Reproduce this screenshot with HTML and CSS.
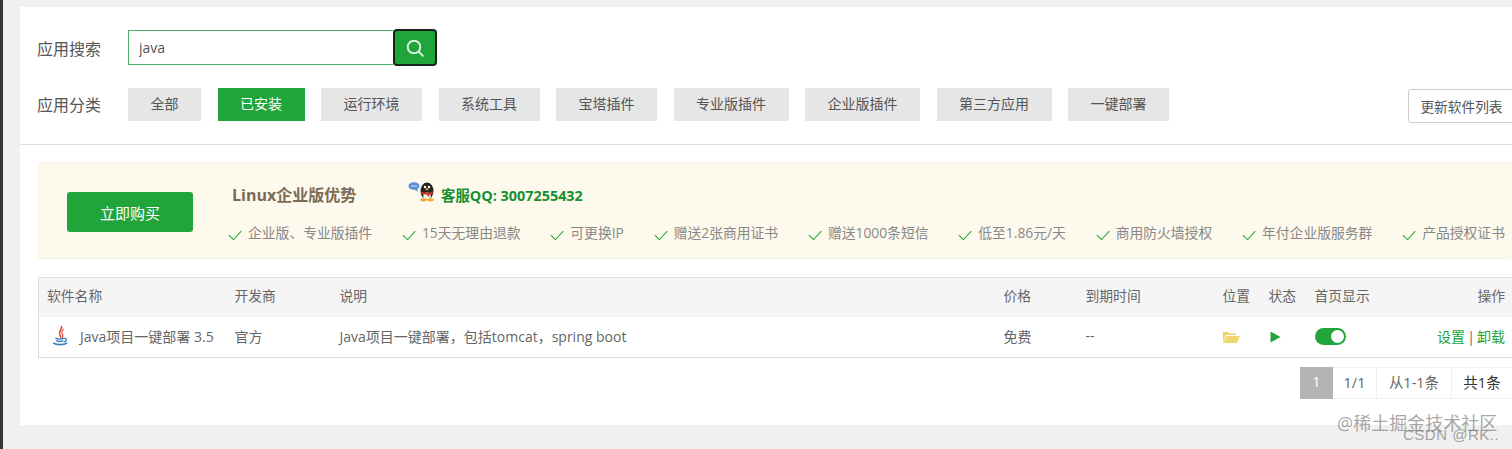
FILE: index.html
```html
<!DOCTYPE html>
<html lang="en">
<head>
    <meta charset="UTF-8">
    <meta name="viewport" content="width=device-width, initial-scale=1.0">
    <title>软件商店</title>
    <link rel="stylesheet" href="styles.css">
</head>
<body>
    <div class="sidebar-edge"></div>
    <div class="panel">
        <div class="filter">
            <div class="search-row">
                <span class="filter-label">应用搜索</span>
                <input class="search-input" type="text" value="java">
                <button class="search-btn">
                    <svg width="20" height="20" viewBox="0 0 20 20" fill="none" stroke="#d8f0dc" stroke-width="2" stroke-linecap="round"><circle cx="9" cy="9" r="6.3"/><path d="M13.6 13.6 L17.8 17.8"/></svg>
                </button>
            </div>
            <div class="cat-row">
                <span class="filter-label">应用分类</span>
                <div class="cats">
                    <span class="cat">全部</span>
                    <span class="cat active">已安装</span>
                    <span class="cat">运行环境</span>
                    <span class="cat">系统工具</span>
                    <span class="cat">宝塔插件</span>
                    <span class="cat">专业版插件</span>
                    <span class="cat">企业版插件</span>
                    <span class="cat">第三方应用</span>
                    <span class="cat">一键部署</span>
                </div>
                <button class="refresh-btn">更新软件列表</button>
            </div>
        </div>

        <div class="content">
            <div class="banner">
                <button class="buy-btn">立即购买</button>
                <div class="banner-info">
                    <div class="banner-top">
                        <span class="banner-title">Linux企业版优势</span>
                        <span class="qq">
                            <svg class="qq-icon" width="29" height="21" viewBox="0 0 29 21">
                                <ellipse cx="6" cy="5" rx="5.5" ry="3.8" fill="#5b8fd8"/>
                                <path d="M6 8 L10 11 L9 7 Z" fill="#5b8fd8"/>
                                <circle cx="4" cy="5" r=".7" fill="#fff"/><circle cx="6" cy="5" r=".7" fill="#fff"/><circle cx="8" cy="5" r=".7" fill="#fff"/>
                                <ellipse cx="19" cy="10" rx="6.5" ry="8.5" fill="#222"/>
                                <ellipse cx="19" cy="15" rx="3.8" ry="3.6" fill="#f4f1ea"/>
                                <circle cx="17" cy="6" r="1.2" fill="#fff"/><circle cx="21" cy="6" r="1.2" fill="#fff"/>
                                <path d="M13 10.5 Q19 13 25 10.5 L24.5 13 L21.5 13.5 L21 16 L18.5 13.5 Q15 13.5 13 12.5 Z" fill="#d8301f"/>
                                <path d="M19 7 L21 8.3 L19 9.4 L17 8.3 Z" fill="#f0a820"/>
                                <ellipse cx="15.5" cy="18.8" rx="3.2" ry="1.6" fill="#f0a820"/>
                                <ellipse cx="22.5" cy="18.8" rx="3.2" ry="1.6" fill="#f0a820"/>
                            </svg>
                            客服QQ: 3007255432
                        </span>
                    </div>
                    <ul class="perks">
                        <li>企业版、专业版插件</li>
                        <li>15天无理由退款</li>
                        <li>可更换IP</li>
                        <li>赠送2张商用证书</li>
                        <li>赠送1000条短信</li>
                        <li>低至1.86元/天</li>
                        <li>商用防火墙授权</li>
                        <li>年付企业版服务群</li>
                        <li>产品授权证书</li>
                    </ul>
                </div>
            </div>

            <table class="soft-table">
                <colgroup>
                    <col class="c-name"><col class="c-dev"><col class="c-desc"><col class="c-price"><col class="c-exp"><col class="c-pos"><col class="c-state"><col class="c-home"><col class="c-op">
                </colgroup>
                <thead>
                    <tr>
                        <th>软件名称</th><th>开发商</th><th>说明</th><th>价格</th><th>到期时间</th><th>位置</th><th>状态</th><th>首页显示</th><th class="op">操作</th>
                    </tr>
                </thead>
                <tbody>
                    <tr>
                        <td>
                            <span class="soft-name">
                                <svg width="17" height="22" viewBox="0 0 20 26" fill="none">
                                    <path d="M11 1 C13 5 7 7 9 11 C10 13 10.5 13.5 10 15" stroke="#d8432c" stroke-width="1.8"/>
                                    <path d="M14 5 C11 7 11 9 12.5 11 C13.5 12.5 12.5 14 12 15" stroke="#e0573c" stroke-width="1.5"/>
                                    <path d="M4 15.5 C6 17 12 17 14 15.5 M5 18.5 C7 19.5 11 19.5 13 18.5" stroke="#3f7cc4" stroke-width="1.6"/>
                                    <path d="M14 16 C18 15 18 19 13.5 20" stroke="#3f7cc4" stroke-width="1.4"/>
                                    <path d="M1.5 21 C5 24 14 24 18 21" stroke="#3f7cc4" stroke-width="1.9"/>
                                </svg>
                                Java项目一键部署 3.5
                            </span>
                        </td>
                        <td>官方</td>
                        <td>Java项目一键部署，包括tomcat，spring boot</td>
                        <td>免费</td>
                        <td>--</td>
                        <td>
                            <svg class="folder" width="18" height="14" viewBox="0 0 18 14"><path d="M1 2 H6 L7.5 3.5 H14 V5 H4 L1 12 Z" fill="#efd06a"/><path d="M4.5 6 H18 L15 13 H1 Z" fill="#f2d66f"/></svg>
                        </td>
                        <td>
                            <svg class="play" width="11" height="12" viewBox="0 0 11 12"><path d="M0.5 0.5 L10.5 6 L0.5 11.5 Z" fill="#20a53a"/></svg>
                        </td>
                        <td><span class="toggle"></span></td>
                        <td class="op"><a class="link">设置</a> | <a class="link">卸载</a></td>
                    </tr>
                </tbody>
            </table>

            <div class="pager">
                <span class="page current">1</span>
                <span class="page p-total">1/1</span>
                <span class="page p-range">从1-1条</span>
                <span class="page p-count">共1条</span>
            </div>
        </div>
    </div>

    <div class="watermark">
        <div class="wm-juejin">@稀土掘金技术社区</div>
        <div class="wm-csdn">CSDN @RK..</div>
    </div>
</body>
</html>
```

FILE: styles.css
```css
*{
    margin: 0;
    padding: 0;
    box-sizing: border-box;
}

html,body{
    height: 449px;
    overflow: hidden;
}

body{
    background-color: #f0f0f0;
    font-family: "Open Sans", "Noto Sans CJK SC", sans-serif;
    font-size: 14px;
    color: #666;
    padding: 7px 0 0 20px;
}

.sidebar-edge{
    position: absolute;
    left: 0;
    top: 0;
    width: 3px;
    height: 449px;
    background-color: #33343a;
}

.panel{
    height: 418px;
    background-color: #fff;
}

/* search and categories */
.filter{
    height: 138px;
    padding: 22px 0 0 17px;
    border-bottom: 1px solid #ddd;
}

.search-row,.cat-row{
    display: flex;
    align-items: center;
}

.filter-label{
    width: 91px;
    font-size: 16px;
    color: #555;
    flex-shrink: 0;
}

.search-input{
    width: 265px;
    height: 35px;
    border: 1px solid #4fb166;
    border-right: none;
    padding: 0 10px;
    font-family: inherit;
    font-size: 14px;
    color: #555;
    outline: none;
}

.search-btn{
    width: 44px;
    height: 37px;
    background-color: #20a53a;
    border: 2px solid #14241a;
    border-radius: 4px;
    display: flex;
    align-items: center;
    justify-content: center;
}

.cat-row{
    margin-top: 20px;
}

.cats{
    display: flex;
    gap: 16.5px;
}

.cat{
    height: 33px;
    line-height: 31px;
    padding: 0 22.5px;
    background-color: #e6e6e6;
    color: #555;
    font-size: 14px;
}

.cat.active{
    background-color: #20a53a;
    color: #fff;
}

.refresh-btn{
    width: 112px;
    height: 34px;
    margin-left: auto;
    margin-right: -8px;
    margin-top: 2px;
    position: relative;
    top: 1px;
    background-color: #fff;
    border: 1px solid #ccc;
    border-radius: 3px;
    font-family: inherit;
    font-size: 13.7px;
    color: #555;
    padding-right: 5px;
}

.content{
    padding: 17px 0 0 18px;
}

/* buy banner */
.banner{
    height: 97px;
    background-color: #fdf9ed;
    border: 1px solid #f7f3e6;
    border-radius: 3px;
    border-right: none;
    display: flex;
    align-items: flex-start;
    padding: 29px 0 0 28px;
    overflow: hidden;
}

.buy-btn{
    width: 126px;
    height: 40px;
    background-color: #20a53a;
    border: none;
    border-radius: 3px;
    color: #fff;
    font-family: inherit;
    font-size: 15px;
    flex-shrink: 0;
}

.banner-info{
    margin-left: 35px;
    margin-top: -10px;
}

.banner-top{
    display: flex;
    align-items: center;
    height: 24px;
}

.banner-title{
    width: 176px;
    margin-left: 4px;
    font-size: 16px;
    font-weight: bold;
    color: #7b6b55;
}

.qq{
    display: flex;
    align-items: center;
    gap: 4px;
    font-size: 14.4px;
    font-weight: bold;
    color: #168f30;
    white-space: nowrap;
}

.qq-icon{
    margin-top: -5px;
}

.perks{
    list-style: none;
    display: flex;
    gap: 29.8px;
    margin-top: 18px;
    white-space: nowrap;
}

.perks li{
    font-size: 13.8px;
    color: #888;
    line-height: 18px;
    display: flex;
    align-items: center;
}

.perks li::before{
    content: "";
    width: 11px;
    height: 6px;
    margin: 0 7px 0 1px;
    border-left: 1px solid #20a53a;
    border-bottom: 1px solid #20a53a;
    transform: rotate(-48deg);
    flex-shrink: 0;
}

/* software table */
.soft-table{
    width: 1474px;
    margin-top: 18px;
    border-collapse: collapse;
    table-layout: fixed;
    border: 1px solid #ddd;
    border-right: none;
    white-space: nowrap;
}

.c-name{width: 188px;}
.c-dev{width: 105px;}
.c-desc{width: 664px;}
.c-price{width: 82px;}
.c-exp{width: 137px;}
.c-pos{width: 46px;}
.c-state{width: 46px;}
.c-home{width: 80px;}

.soft-table th{
    height: 39px;
    background-color: #f5f5f5;
    font-weight: normal;
    font-size: 13.8px;
    color: #666;
    text-align: left;
    padding: 0 0 4px 8px;
    border-bottom: 1px solid #eee;
}

.soft-table td{
    height: 41px;
    font-size: 14px;
    color: #666;
    padding: 0 0 3px 8px;
}

.soft-table .op{
    text-align: right;
    padding-right: 7px;
    padding-left: 0;
    word-spacing: -1.5px;
}

.soft-name{
    display: flex;
    align-items: center;
    gap: 11px;
    margin-left: 5px;
}

.link{
    color: #20a53a;
}

.toggle{
    display: block;
    position: relative;
    width: 31px;
    height: 17px;
    background-color: #20a53a;
    border-radius: 9px;
    margin-top: 1px;
}

.toggle::after{
    content: "";
    position: absolute;
    right: 2px;
    top: 2px;
    width: 13px;
    height: 13px;
    background-color: #fff;
    border-radius: 50%;
}

.folder,.play{
    display: block;
    margin-top: 3px;
}

.folder{
    margin-left: -1px;
}

.play{
    margin-left: 1px;
}

/* pagination */
.pager{
    display: flex;
    justify-content: flex-end;
    margin-top: 9px;
}

.page{
    height: 32px;
    line-height: 30px;
    text-align: center;
    font-size: 14.5px;
    color: #666;
    border-right: 1px solid #eee;
    border-top: 1px solid #f2f2f2;
    border-bottom: 1px solid #f2f2f2;
}

.page.current{
    width: 33px;
    background-color: #b3b3b3;
    color: #fff;
    border: none;
}

.p-total{width: 44px;}
.p-range{width: 75px;}
.p-count{width: 60px; border-right: none; color: #333;}

/* image watermark */
.watermark{
    position: absolute;
    right: 0;
    top: 410px;
    width: 175px;
    height: 39px;
    color: rgba(110,110,110,.62);
    pointer-events: none;
}

.wm-juejin{
    font-size: 18px;
    line-height: 26px;
    white-space: nowrap;
}

.wm-csdn{
    font-family: "Liberation Sans", sans-serif;
    font-size: 15px;
    line-height: 18px;
    margin-top: -10px;
    padding-left: 66px;
    white-space: nowrap;
    letter-spacing: .5px;
}
```
